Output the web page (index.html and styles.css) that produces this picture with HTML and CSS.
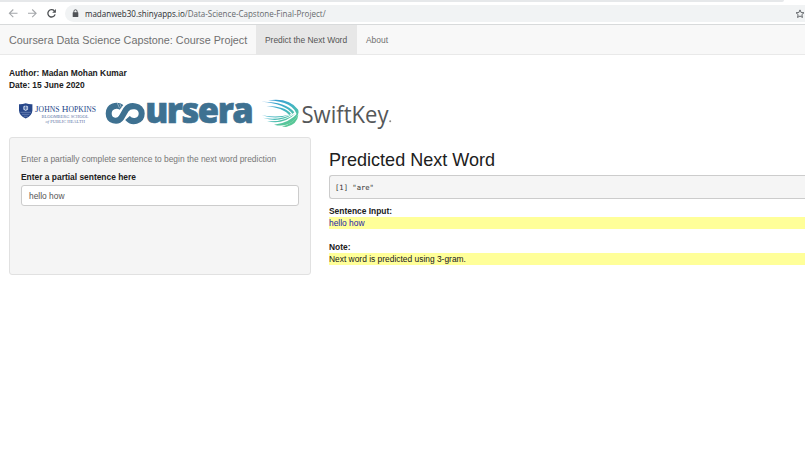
FILE: index.html
```html
<!DOCTYPE html>
<html lang="en">
<head>
<meta charset="utf-8">
<title>Coursera Data Science Capstone: Course Project</title>
<link rel="stylesheet" href="styles.css">
</head>
<body>
<div class="browser">
  <div class="tab-strip"></div>
  <div class="toolbar">
    <svg class="nav-icons" width="65" height="18" viewBox="0 0 65 18" fill="none" stroke-width="1.1">
      <path d="M17.5 8.3H9.5M13.3 4.5L9.4 8.3l3.9 3.8" stroke="#a4a7aa"/>
      <path d="M28 8.3h8M32.2 4.5l3.9 3.8-3.9 3.8" stroke="#a4a7aa"/>
      <path d="M54.3 5.8A3.7 3.7 0 1 0 55.1 9.4" stroke="#4c4f52" stroke-width="1.3"/>
      <path d="M55.9 4v3.7h-3.7z" fill="#4c4f52"/>
    </svg>
    <div class="address">
      <svg width="7" height="9" viewBox="0 0 7 9"><path d="M1.9 4V2.4a1.6 1.6 0 0 1 3.2 0V4" fill="none" stroke="#505357"/><rect x=".7" y="3.2" width="5.6" height="4.9" rx=".6" fill="#505357"/></svg>
      <span class="url"><span class="host">madanweb30.shinyapps.io</span>/Data-Science-Capstone-Final-Project/</span>
      <svg class="star" width="10" height="10" viewBox="0 0 10 10"><path d="M5 .9l1.15 2.6 2.8.25-2.1 1.9.6 2.8L5 7 2.55 8.45l.6-2.8-2.1-1.9 2.8-.25z" fill="none" stroke="#56595d" stroke-width=".9"/></svg>
    </div>
  </div>
</div>
<nav class="navbar">
  <span class="brand">Coursera Data Science Capstone: Course Project</span>
  <a class="tab active">Predict the Next Word</a>
  <a class="tab">About</a>
</nav>
<main>
  <div class="byline"><div>Author: Madan Mohan Kumar</div><div>Date: 15 June 2020</div></div>
  <svg class="logos" width="400" height="40" viewBox="0 95 400 40">
    <defs>
      <linearGradient id="wing" gradientUnits="userSpaceOnUse" x1="268" y1="99" x2="282" y2="126"><stop offset="0" stop-color="#3796d3"/><stop offset=".55" stop-color="#42b4c5"/><stop offset="1" stop-color="#58c797"/></linearGradient>
    </defs>
    <g fill="#27478a">
      <path d="M19 104.300q3.300.2 6.700-1.100 3.400 1.300 6.700 1.100v6.200q-.3 5.200-6.700 8-6.400-2.800-6.700-8z"/>
      <path d="M23.300 106.500q2.400-2.200 4.800 0v3l-2.400 1.600-2.400-1.600z" fill="#c3d0e6"/>
      <path d="M25.700 105v5M24 108h3.400" stroke="#27478a" stroke-width=".7"/>
      <path d="M20.500 112.300h10.400M22 114.300h7.400M23.700 116.200h4" stroke="#8fa3c9" stroke-width=".6"/>
      <g class="serif">
        <text x="35" y="111.900" font-size="9" textLength="61" lengthAdjust="spacingAndGlyphs">J<tspan font-size="7.400">OHNS</tspan> H<tspan font-size="7.400">OPKINS</tspan></text>
        <g fill="#6275a5"><text x="41.500" y="118.300" font-size="4.900" textLength="47" lengthAdjust="spacingAndGlyphs">BLOOMBERG SCHOOL</text>
        <text x="45.500" y="123" font-size="4.900" textLength="39.500" lengthAdjust="spacingAndGlyphs"><tspan font-style="italic">of</tspan> PUBLIC HEALTH</text></g>
      </g>
    </g>
    <path d="M121.500 107.400C117 104 108.700 106 108.700 113.500C108.700 121 117.500 123.300 121.500 117.500L126 109.700C130 104 141.700 105.200 141.700 113.500C141.700 121.600 132 123.300 127.500 118" fill="none" stroke="#3e7191" stroke-width="6"/>
    <path d="M117.300 103.100l2.200 5M119.800 103.700l1.700 4.200" stroke="#a9c2d0" stroke-width=".8"/>
    <text class="coursera" x="145.300" y="123.300" font-size="35" textLength="107" lengthAdjust="spacingAndGlyphs">ursera</text>
    <g fill="url(#wing)">
      <path d="M268 100.300Q289 97.300 298 109.400Q299.500 112.300 297 116Q294 101.500 268 100.300z"/>
      <path d="M261.600 101.700Q286 101.500 294.300 112.300L292.500 114Q285 103.500 261.600 101.700z"/>
      <path d="M266.500 106Q285 106.200 291 113.700L289.300 115Q282.500 107.700 266.500 106z"/>
      <path d="M262 115.200Q277 118.200 290 114.500Q277 120.200 262 115.200z"/>
      <path d="M263 117.800Q279 120.700 293 114Q279 123.500 263 117.800z"/>
      <path d="M267 121.200Q283 122.400 295.500 113.400Q283 125.500 267 121.200z"/>
      <path d="M274 124.700Q289 123.300 298.300 112.500Q297.500 118 291.500 122.300Q284 127.200 274 124.700z"/>
      <path d="M282 126.500Q292.500 124.200 298.400 114.500Q297.500 124.500 286 127z"/>
    </g>
    <text class="swiftkey" x="301.500" y="122.600" font-size="24" textLength="87" lengthAdjust="spacingAndGlyphs">SwiftKey</text>
    <circle cx="390.200" cy="121.300" r="1" fill="#8b8b8b"/>
  </svg>
  <div class="columns">
    <section class="panel">
      <p>Enter a partially complete sentence to begin the next word prediction</p>
      <label>Enter a partial sentence here</label>
      <div class="field">hello how</div>
    </section>
    <section class="result">
      <h1>Predicted Next Word</h1>
      <pre>[1] "are"</pre>
      <div class="bold">Sentence Input:</div>
      <div class="mark blue">hello how</div>
      <div class="bold note">Note:</div>
      <div class="mark">Next word is predicted using 3-gram.</div>
    </section>
  </div>
</main>
</body>
</html>
```
FILE: styles.css
```css
* { box-sizing: border-box; }
body { margin: 0; width: 805px; height: 471px; overflow: hidden; background: #fff; color: #202020; font: 8.42px/12px "Liberation Sans", Arial, sans-serif; }
.browser { height: 25px; border-bottom: 1px solid #d8dadb; }
.tab-strip { width: 784px; height: 2px; background: #e6e8ea; border-radius: 0 0 3px 0; }
.toolbar { display: flex; padding-top: 3px; }
.nav-icons { flex: none; }
.address { flex: 1; height: 17px; display: flex; align-items: center; padding-left: 7px; background: #f1f3f4; border-radius: 9px 0 0 9px; }
.url { margin-left: 6px; color: #66696c; font: 8.02px/16px "Open Sans", sans-serif; white-space: nowrap; }
.host { color: #292b2e; }
.star { margin-left: auto; }
.navbar { height: 30px; display: flex; background: #f8f8f8; border-bottom: 1px solid #e9e9e9; color: #707070; line-height: 30px; white-space: nowrap; }
.brand { width: 256px; padding-left: 9px; font-size: 10.8px; }
.tab { padding: 0 9px; }
.active { width: 101px; height: 30px; background: #e7e7e7; color: #555; }
main { padding: 12px 0 0 9px; }
.bold, .byline, label { font-weight: 700; }
.logos { display: block; margin: 4px 0 0 -9px; overflow: visible; }
.serif { font-family: "Liberation Serif", serif; }
.coursera { font-family: "Open Sans", sans-serif; font-weight: 800; letter-spacing: -1.5px; fill: #3e7191; stroke: #3e7191; stroke-width: .7px; }
.swiftkey { font-family: "Open Sans", sans-serif; font-weight: 400; fill: #555759; }
.columns { display: flex; gap: 18px; margin-top: 2px; }
.panel { flex: none; width: 302px; height: 138px; padding: 15px 11px; background: #f5f5f5; border: 1px solid #e1e1e1; border-radius: 3px; }
.panel p { margin: 0 0 6px; color: #777; }
label { display: block; }
.field { height: 21px; margin-top: 2px; padding: 0 7px; border: 1px solid #ccc; border-radius: 3px; background: #fff; color: #555; line-height: 20px; }
.result { flex: 1; }
h1 { margin: 12px 0 0; font-size: 18.05px; font-weight: 400; line-height: 22px; }
pre { height: 24px; margin: 4px 0 6px; padding: 0 5px; border: 1px solid #ccc; border-right: 0; border-radius: 3px 0 0 3px; background: #f5f5f5; color: #333; font: 7.2px/23px "DejaVu Sans Mono", monospace; }
.mark { background: #ffff99; color: #202020; }
.blue { color: #1c1ca6; }
.note { margin-top: 12px; }
```
